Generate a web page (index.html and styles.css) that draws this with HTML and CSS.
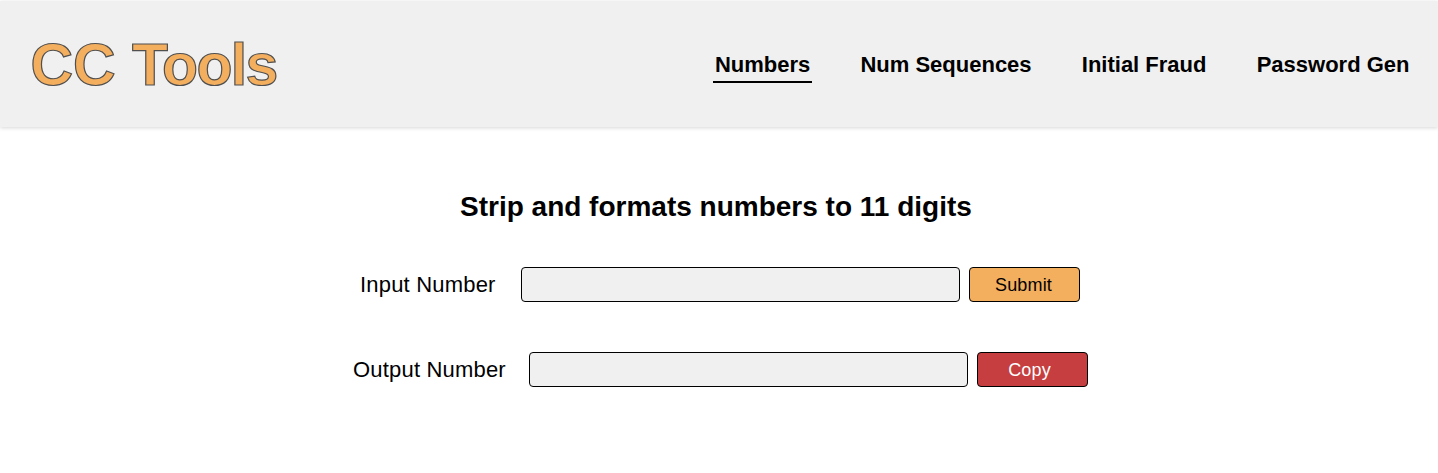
FILE: index.html
```html
<!DOCTYPE html>
<html lang="en">
<head>
<meta charset="utf-8">
<title>CC Tools</title>
<link rel="stylesheet" href="styles.css">
</head>
<body>
<header class="header">
  <h1 class="logo">CC <span class="logo-word">Tools</span></h1>
  <nav class="nav">
    <a class="nav-link active">Numbers</a>
    <a class="nav-link">Num Sequences</a>
    <a class="nav-link">Initial Fraud</a>
    <a class="nav-link">Password Gen</a>
  </nav>
</header>
<main class="main">
  <h2 class="title">Strip and formats numbers to 11 digits</h2>
  <div class="row row-input">
    <label class="label" for="in">Input Number</label>
    <input class="field" id="in" type="text">
    <button class="button submit">Submit</button>
  </div>
  <div class="row row-output">
    <label class="label" for="out">Output Number</label>
    <input class="field" id="out" type="text">
    <button class="button copy">Copy</button>
  </div>
</main>
</body>
</html>
```
FILE: styles.css
```css
* { box-sizing: border-box; }
body {
  margin: 0;
  background: #fff;
  color: #000;
  font-family: "Liberation Sans", Arial, sans-serif;
}
.header {
  display: flex;
  justify-content: space-between;
  align-items: center;
  height: 126px;
  margin-top: 1px;
  padding: 0 26.5px 0 30.5px;
  background: #f0f0f0;
  box-shadow: 0 1px 4px rgba(0, 0, 0, .16);
}
.logo {
  margin: 0;
  padding-top: 1px;
  color: #f3ae5e;
  font-size: 59px;
  line-height: 68px;
  white-space: nowrap;
  -webkit-text-stroke: 1.2px #505050;
}
.logo-word { letter-spacing: -1.7px; }
.nav { display: flex; gap: 46.2px; padding-top: 5px; }
.nav-link {
  padding: 0 2px 1px;
  border-bottom: 2px solid transparent;
  font-size: 22px;
  font-weight: 700;
  line-height: 30px;
  white-space: nowrap;
}
.active { border-color: #000; }
.main { padding-top: 62px; }
.title {
  margin: 0 0 0 460px;
  font-size: 28px;
  line-height: 36px;
  white-space: nowrap;
}
.row { display: flex; align-items: center; height: 35px; }
.row-input { margin: 42px 0 0 360px; }
.row-output { margin: 50px 0 0 353px; }
.label { font-size: 22px; letter-spacing: .19px; white-space: nowrap; }
.row-input .label { width: 161px; }
.row-output .label { width: 176px; }
.field {
  width: 439px;
  height: 35px;
  border: 1px solid #000;
  border-radius: 4px;
  background: #f0f0f0;
}
.button {
  width: 111px;
  height: 35px;
  margin: 0 0 0 9px;
  padding: 1px 2px 0 0;
  border: 1px solid #000;
  border-radius: 4px;
  font: 18px "Liberation Sans", Arial, sans-serif;
  letter-spacing: .15px;
}
.submit { background: #f3ae5e; color: #000; }
.copy { background: #c63e3f; color: #fff; padding-right: 6px; }
```
